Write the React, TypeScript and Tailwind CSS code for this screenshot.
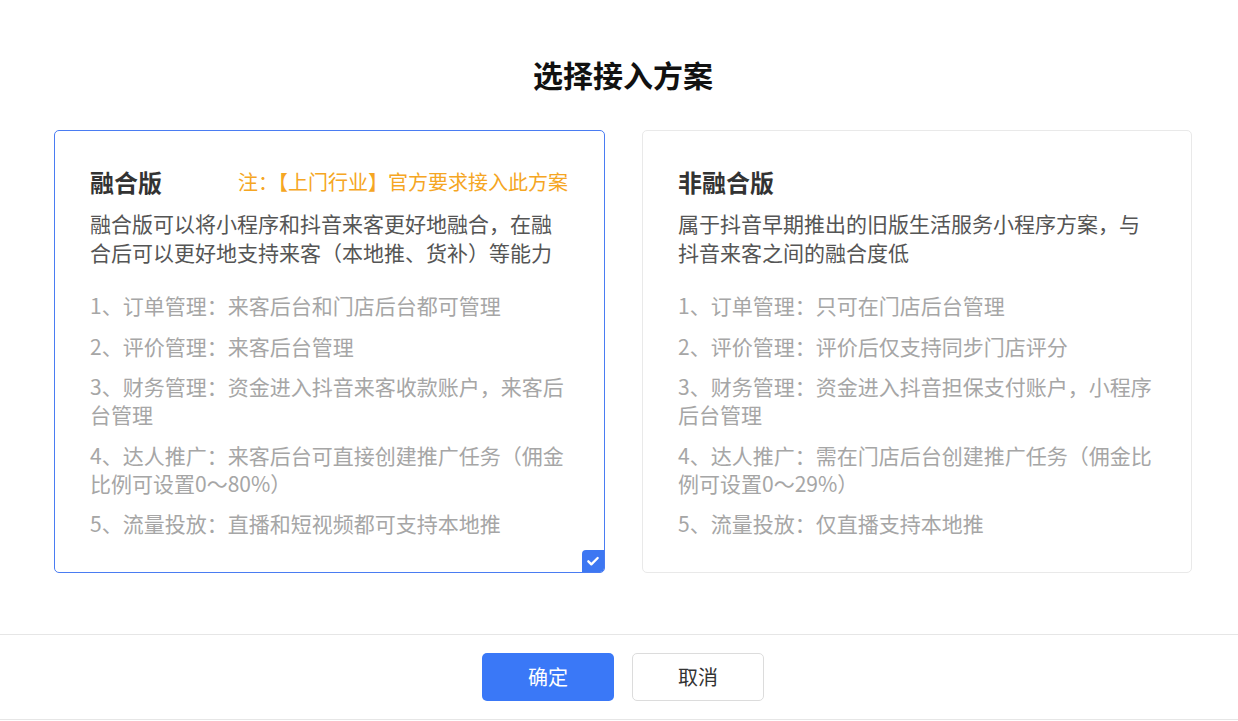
import { useState } from "react";

type Plan = {
	id: string;
	name: string;
	note?: string;
	desc: string;
	items: string[];
};

const plans: Plan[] = [
	{
		id: "fusion",
		name: "融合版",
		note: "注：【上门行业】官方要求接入此方案",
		desc: "融合版可以将小程序和抖音来客更好地融合，在融合后可以更好地支持来客（本地推、货补）等能力",
		items: [
			"1、订单管理：来客后台和门店后台都可管理",
			"2、评价管理：来客后台管理",
			"3、财务管理：资金进入抖音来客收款账户，来客后台管理",
			"4、达人推广：来客后台可直接创建推广任务（佣金比例可设置0～80%）",
			"5、流量投放：直播和短视频都可支持本地推",
		],
	},
	{
		id: "legacy",
		name: "非融合版",
		desc: "属于抖音早期推出的旧版生活服务小程序方案，与抖音来客之间的融合度低",
		items: [
			"1、订单管理：只可在门店后台管理",
			"2、评价管理：评价后仅支持同步门店评分",
			"3、财务管理：资金进入抖音担保支付账户，小程序后台管理",
			"4、达人推广：需在门店后台创建推广任务（佣金比例可设置0～29%）",
			"5、流量投放：仅直播支持本地推",
		],
	},
];

const PlanCard = ({ plan, selected, onSelect }: { plan: Plan; selected: boolean; onSelect: () => void }) => {
	return (
		<div
			onClick={onSelect}
			className={
				"relative h-[443px] cursor-pointer rounded-[5px] border bg-white pl-[35px] pr-[36px] pt-[35px] " +
				(selected ? "border-[#4a7cf2]" : "border-[#e9e9e9]")
			}
		>
			<div className="flex items-center justify-between">
				<div className="text-[24px] font-bold leading-[32px] text-[#333333]">{plan.name}</div>
				{plan.note && <div className="text-[20px] leading-[32px] text-[#f5a623]">{plan.note}</div>}
			</div>
			<div className="mt-[11px] text-[21px] leading-[29px] text-[#555555]">{plan.desc}</div>
			<div className="mt-[24px] flex flex-col gap-[12.5px]">
				{plan.items.map((item) => (
					<div key={item} className="text-[21px] leading-[28px] text-[#a6a6a6]">
						{item}
					</div>
				))}
			</div>
			{selected && (
				<div className="absolute bottom-0 right-0 flex h-[22px] w-[22px] items-center justify-center rounded-tl-[4px] rounded-br-[4px] bg-[#3d77f2]">
					<svg width="16" height="16" viewBox="0 0 24 24" fill="none">
						<path d="M5 12.5l4.5 4.5 9.5-9.5" stroke="white" strokeWidth="3.5" strokeLinecap="round" strokeLinejoin="round" />
					</svg>
				</div>
			)}
		</div>
	);
};

export default function App() {
	const [selected, setSelected] = useState("fusion");

	return (
		<div
			className="flex h-[721px] w-full flex-col bg-white"
			style={{ fontFamily: '"Noto Sans CJK SC", "Noto Sans", sans-serif' }}
		>
			<div className="pl-[8px] pt-[54px] text-center text-[30px] font-bold leading-[40px] text-[#111111]">选择接入方案</div>
			<div className="mt-[36px] grid grid-cols-[551px_550px] gap-[37px] pl-[54px]">
				{plans.map((p) => (
					<PlanCard key={p.id} plan={p} selected={selected === p.id} onSelect={() => setSelected(p.id)} />
				))}
			</div>
			<div className="mt-[61px] flex justify-center gap-[18px] border-y border-[#e6e6e6] py-[18px] pl-[8px]">
				<button className="h-[48px] w-[132px] rounded-[5px] bg-[#3a78f7] text-[20px] text-white">确定</button>
				<button className="h-[48px] w-[132px] rounded-[5px] border border-[#dcdcdc] bg-white text-[20px] text-[#333333]">
					取消
				</button>
			</div>
		</div>
	);
}
